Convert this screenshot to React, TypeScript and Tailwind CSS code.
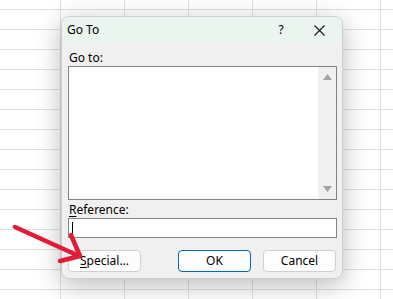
import React from 'react';

const font = { fontFamily: '"Noto Sans", "Open Sans", sans-serif' };

const App = () => {
  return (
    <div
      className="relative w-[393px] h-[299px] overflow-hidden bg-white bg-[linear-gradient(to_right,#e0e0e0_1px,transparent_1px),linear-gradient(to_bottom,#e0e0e0_1px,transparent_1px)] bg-[size:64px_20px] bg-[position:60px_9px] pt-[16px] pl-[61px] text-[12px] text-black"
      style={font}
    >
      {/* Go To dialog */}
      <div className="w-[282px] h-[263px] rounded-[8px] border border-[#cfcfcf] bg-[#f0f0f0] shadow-[0_6px_26px_rgba(0,0,0,0.28)] overflow-hidden flex flex-col">
        {/* title bar */}
        <div className="h-[26px] bg-[#eaf5ef] flex items-center pl-[5px]">
          <span className="flex-1 leading-none">Go To</span>
          <span className="w-[20px] text-center leading-none mr-[23px]">?</span>
          <svg width="11" height="11" viewBox="0 0 11 11" className="mr-[17px]">
            <path d="M0.5 0.5 L10.5 10.5 M10.5 0.5 L0.5 10.5" stroke="#1a1a1a" strokeWidth="1.1" />
          </svg>
        </div>

        <div className="flex flex-col px-[6px] pt-[7px]">
          <label className="h-[16px] leading-[16px] pl-[1px]">Go to:</label>
          <div className="h-[134px] w-[269px] border border-[#838383] bg-white flex justify-end">
            <div className="w-[18px] bg-[#f0f0f0] flex flex-col items-center justify-between py-[7px]">
              <svg width="9" height="6" viewBox="0 0 9 6">
                <path d="M4.5 0 L9 6 L0 6 Z" fill="#a3a3a3" />
              </svg>
              <svg width="9" height="6" viewBox="0 0 9 6">
                <path d="M0 0 L9 0 L4.5 6 Z" fill="#a3a3a3" />
              </svg>
            </div>
          </div>

          <label className="mt-[2px] h-[16px] leading-[16px] pl-[1px]">
            <span className="underline underline-offset-2">R</span>eference:
          </label>
          <div className="h-[20px] w-[269px] border border-[#838383] bg-white flex items-center pl-[3px]">
            <div className="w-[1px] h-[13px] bg-black" />
          </div>

          <div className="mt-[12px] flex w-[269px]">
            <button className="w-[73px] h-[22px] rounded-[4px] border border-[#d0d0d0] bg-[#fdfdfd] leading-none">
              <span className="underline underline-offset-2">S</span>pecial...
            </button>
            <button className="ml-auto w-[73px] h-[22px] rounded-[4px] border border-[#0067c0] bg-[#fdfdfd] leading-none">
              OK
            </button>
            <button className="ml-[12px] mr-[1px] w-[73px] h-[22px] rounded-[4px] border border-[#d0d0d0] bg-[#fdfdfd] leading-none">
              Cancel
            </button>
          </div>
        </div>
      </div>

      {/* red annotation arrow */}
      <svg className="absolute left-0 top-0 pointer-events-none" width="393" height="299" viewBox="0 0 393 299">
        <path
          d="M15 227 L79 256 M71 235 L80 256 L60 261"
          stroke="#e31b35"
          strokeWidth="4.5"
          strokeLinecap="round"
          strokeLinejoin="round"
          fill="none"
        />
      </svg>
    </div>
  );
};

export default App;
